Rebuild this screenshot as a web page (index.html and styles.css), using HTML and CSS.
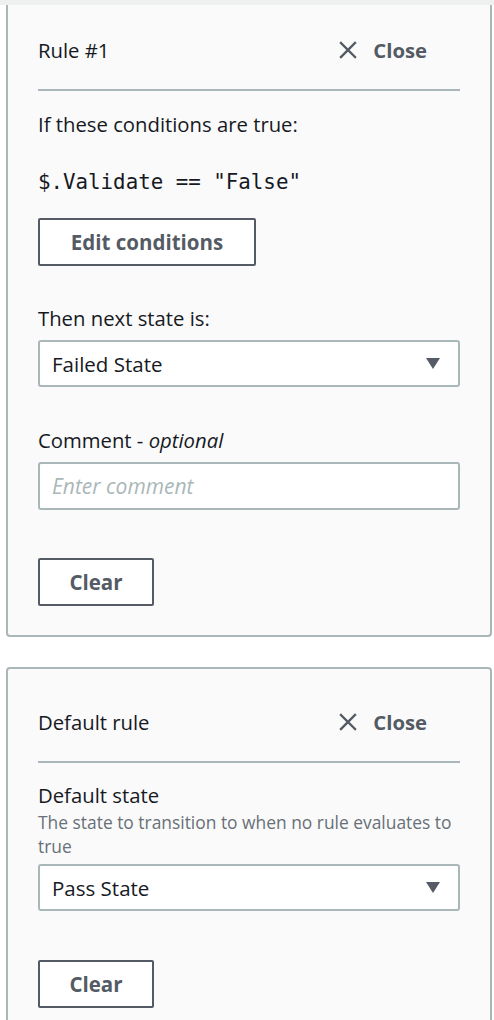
FILE: index.html
```html
<!DOCTYPE html>
<html lang="en">
<head>
<meta charset="utf-8">
<link rel="stylesheet" href="styles.css">
</head>
<body>
<div class="topband"></div>
<section class="card card-first">
  <div class="card-header">
    <span class="card-title">Rule #1</span>
    <button class="close-btn" type="button">
      <svg class="close-icon" width="18" height="18" viewBox="0 0 18 18"><path d="M2 2 L16 16 M16 2 L2 16" stroke="#545b64" stroke-width="2.4" fill="none" stroke-linecap="square"/></svg>
      <span>Close</span>
    </button>
  </div>
  <div class="divider"></div>
  <p class="label label-cond">If these conditions are true:</p>
  <p class="code">$.Validate == "False"</p>
  <button class="btn btn-edit" type="button">Edit conditions</button>
  <p class="label label-next">Then next state is:</p>
  <div class="select select-1">
    <span>Failed State</span>
    <span class="caret"></span>
  </div>
  <p class="label label-comment">Comment - <em>optional</em></p>
  <div class="input"><span class="placeholder">Enter comment</span></div>
  <button class="btn btn-clear btn-clear-1" type="button">Clear</button>
</section>

<section class="card card-second">
  <div class="card-header">
    <span class="card-title">Default rule</span>
    <button class="close-btn" type="button">
      <svg class="close-icon" width="18" height="18" viewBox="0 0 18 18"><path d="M2 2 L16 16 M16 2 L2 16" stroke="#545b64" stroke-width="2.4" fill="none" stroke-linecap="square"/></svg>
      <span>Close</span>
    </button>
  </div>
  <div class="divider"></div>
  <p class="label label-default">Default state</p>
  <p class="desc">The state to transition to when no rule evaluates to true</p>
  <div class="select select-2">
    <span>Pass State</span>
    <span class="caret"></span>
  </div>
  <button class="btn btn-clear btn-clear-2" type="button">Clear</button>
</section>
</body>
</html>
```

FILE: styles.css
```css
html, body {
  margin: 0;
  padding: 0;
  background: #ffffff;
}
body {
  font-family: "Open Sans", "Noto Sans", Arial, sans-serif;
  color: #16191f;
  width: 494px;
  height: 1020px;
  overflow: hidden;
}
p { margin: 0; }
.topband {
  height: 5px;
  background: #eef0f0;
}
.card {
  margin-left: 6px;
  width: 486px;
  box-sizing: border-box;
  background: #fafafa;
  border: 2px solid #aab7b8;
  border-radius: 4px;
  padding: 0 30px;
  display: flex;
  flex-direction: column;
  align-items: flex-start;
}
.card-first {
  border-top: none;
  border-radius: 0 0 4px 4px;
  padding-top: 25px;
  padding-bottom: 29px;
}
.card-second {
  margin-top: 30px;
  padding-top: 33px;
  padding-bottom: 40px;
}
.card-header {
  height: 40px;
  width: 100%;
  display: flex;
  align-items: center;
  justify-content: space-between;
}
.card-title {
  font-size: 20.3px;
}
.close-btn {
  display: flex;
  align-items: center;
  gap: 16px;
  background: none;
  border: none;
  padding: 0;
  margin-right: 33px;
  font-family: inherit;
  font-size: 20.3px;
  font-weight: 700;
  color: #545b64;
}
.divider {
  width: 100%;
  height: 2px;
  background: #aab7b8;
  margin-top: 19px;
}
.label {
  font-size: 20.3px;
  line-height: 24px;
}
.label em { font-style: italic; }
.label-cond { margin-top: 21px; }
.code {
  margin-top: 32px;
  font-family: "DejaVu Sans Mono", "Liberation Mono", monospace;
  font-size: 20.8px;
  line-height: 28px;
}
.btn {
  box-sizing: border-box;
  height: 48px;
  background: #ffffff;
  border: 2px solid #545b64;
  border-radius: 2px;
  font-family: inherit;
  font-size: 20.5px;
  font-weight: 700;
  color: #545b64;
  padding: 0;
}
.btn-edit { margin-top: 22px; width: 218px; }
.label-next { margin-top: 40px; }
.select {
  box-sizing: border-box;
  width: 100%;
  height: 47px;
  margin-top: 10px;
  background: #ffffff;
  border: 2px solid #aab7b8;
  border-radius: 3px;
  padding: 0 18px 0 12px;
  display: flex;
  align-items: center;
  justify-content: space-between;
  font-size: 20.5px;
}
.caret {
  width: 0;
  height: 0;
  border-left: 7px solid transparent;
  border-right: 7px solid transparent;
  border-top: 11px solid #545b64;
}
.label-comment { margin-top: 41px; }
.input {
  box-sizing: border-box;
  width: 100%;
  height: 48px;
  margin-top: 10px;
  background: #ffffff;
  border: 2px solid #aab7b8;
  border-radius: 3px;
  padding: 0 12px;
  display: flex;
  align-items: center;
}
.placeholder {
  font-size: 21px;
  font-style: italic;
  color: #aab7b8;
}
.btn-clear { width: 116px; }
.btn-clear-1 { margin-top: 48px; }
.label-default { margin-top: 20px; }
.desc {
  margin-top: 3px;
  font-size: 17.4px;
  line-height: 24px;
  color: #687078;
}
.select-2 { margin-top: 6px; }
.btn-clear-2 { margin-top: 49px; }
```
